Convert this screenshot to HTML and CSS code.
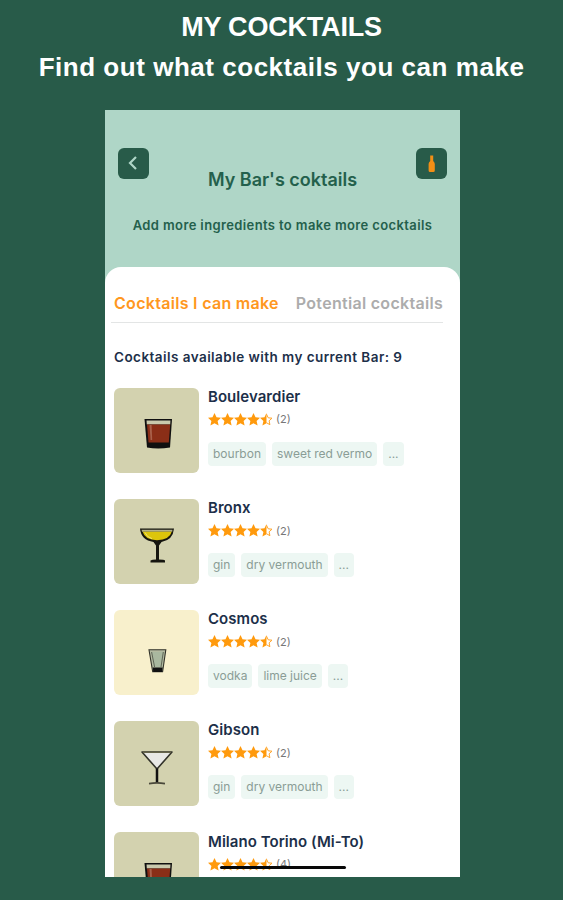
FILE: index.html
```html
<!DOCTYPE html>
<html lang="en">
<head>
  <meta charset="UTF-8" />
  <meta name="viewport" content="width=device-width, initial-scale=1.0" />
  <title>My Cocktails</title>
  <link rel="stylesheet" href="styles.css">
</head>
<body>
  <!-- shared icons -->
  <svg class="sprite" aria-hidden="true">
    <symbol id="stars" viewBox="0 0 65 13">
      <g fill="#ff9a0d">
        <path id="star" d="M6.5 0 8.5 4.2 13 4.7 9.6 7.9 10.6 12.6 6.5 10.3 2.4 12.6 3.4 7.9 0 4.7 4.5 4.2Z" />
        <use href="#star" x="13" />
        <use href="#star" x="26" />
        <use href="#star" x="39" />
        <path d="M58.5 0V10.3L54.4 12.6 55.4 7.9 52 4.7 56.5 4.2Z" />
      </g>
      <path d="M58.5 1.2 60.2 4.8 64 5.2 61.1 7.8 61.9 11.7 58.5 9.7" fill="none" stroke="#ffa52b" stroke-width="1" />
    </symbol>
    <symbol id="rocks" viewBox="0 0 85 85">
      <path d="M30.5 31H58L56 59.5Q44 61.5 33 59.5Z" fill="#101010" />
      <path d="M32.5 32.5H56.5L56.2 36.5H32.8Z" fill="#c9c9ad" />
      <path d="M33 36.5H56.2L54.8 54.5H34.5Z" fill="#8a2e17" />
      <path d="M35.5 37H37.6L38.2 52H36.6Z" fill="#a9604a" />
    </symbol>
    <symbol id="coupe" viewBox="0 0 85 85">
      <path d="M26 29.5H60Q59 41 47.5 43L45 46.5V60.5Q50 60.5 51 61.5V63.5H36.5V61.5Q38 60.5 42 60.5V46.5L39.5 43Q27 41 26 29.5Z" fill="#15150f" />
      <path d="M27.5 30.8H58.5L58.2 32.8H28Z" fill="#b5b28a" />
      <path d="M28.6 32.8H57.7Q55.5 41 43 41.3 31 41 28.6 32.8Z" fill="#dcc50b" />
      <path d="M31 33.5Q33 38.5 38 39.6" fill="none" stroke="#eee17a" stroke-width="1" />
    </symbol>
    <symbol id="shot" viewBox="0 0 85 85">
      <path d="M35 39.8H51.8L48.6 61.8H38.7Z" fill="#b3baa0" stroke="#33332a" stroke-width="1.1" />
      <path d="M37 42H50L48 57H40Z" fill="#a9b89f" />
      <path d="M38.8 57.5H48.6L48.2 62H39.2Z" fill="#111" />
      <path d="M37.6 42 40.6 57M49.3 42 47 57" stroke="#4d5144" stroke-width=".8" />
    </symbol>
    <symbol id="martini" viewBox="0 0 85 85">
      <path d="M28 31H58L43 48Z" fill="#e8e8e5" stroke="#33332a" stroke-width="1.6" stroke-linejoin="round" />
      <path d="M29 31.4H57" stroke="#65644a" stroke-width="1.4" />
      <path d="M43 47.5V62" stroke="#111" stroke-width="2.5" />
      <path d="M35 62.6Q43 61.2 51 62.6" fill="none" stroke="#49483a" stroke-width="1.6" />
    </symbol>
  </svg>

  <header class="promo">
    <h1>MY COCKTAILS</h1>
    <p>Find out what cocktails you can make</p>
  </header>

  <main class="phone">
    <section class="top">
      <nav class="top-nav">
        <button class="icon-btn" aria-label="Back">
          <svg width="31" height="31" viewBox="0 0 31 31"><path d="M18 9 12 15 18 21" fill="none" stroke="#afd6c7" stroke-width="2.2" /></svg>
        </button>
        <button class="icon-btn" aria-label="My bar">
          <svg width="31" height="31" viewBox="0 0 31 31"><path d="M14.2 7.5H17.2V13Q18.8 14.5 18.8 16V22.5Q18.8 24 17.3 24H14.1Q12.6 24 12.6 22.5V16Q12.6 14.5 14.2 13Z" fill="#f28f16" /></svg>
        </button>
      </nav>
      <h2>My Bar's coktails</h2>
      <p>Add more ingredients to make more cocktails</p>
    </section>

    <section class="sheet">
      <div class="tabs">
        <span class="tab active">Cocktails I can make</span>
        <span class="tab">Potential cocktails</span>
      </div>
      <p class="count">Cocktails available with my current Bar: 9</p>

      <div class="list">
        <article class="drink">
          <svg class="thumb"><use href="#rocks" /></svg>
          <div class="info">
            <h3>Boulevardier</h3>
            <div class="rating"><svg><use href="#stars" /></svg><span>(2)</span></div>
            <div class="tags"><span>bourbon</span><span>sweet red vermo</span><span>...</span></div>
          </div>
        </article>
        <article class="drink">
          <svg class="thumb"><use href="#coupe" /></svg>
          <div class="info">
            <h3>Bronx</h3>
            <div class="rating"><svg><use href="#stars" /></svg><span>(2)</span></div>
            <div class="tags"><span>gin</span><span>dry vermouth</span><span>...</span></div>
          </div>
        </article>
        <article class="drink">
          <svg class="thumb light"><use href="#shot" /></svg>
          <div class="info">
            <h3>Cosmos</h3>
            <div class="rating"><svg><use href="#stars" /></svg><span>(2)</span></div>
            <div class="tags"><span>vodka</span><span>lime juice</span><span>...</span></div>
          </div>
        </article>
        <article class="drink">
          <svg class="thumb"><use href="#martini" /></svg>
          <div class="info">
            <h3>Gibson</h3>
            <div class="rating"><svg><use href="#stars" /></svg><span>(2)</span></div>
            <div class="tags"><span>gin</span><span>dry vermouth</span><span>...</span></div>
          </div>
        </article>
        <article class="drink">
          <svg class="thumb"><use href="#rocks" /></svg>
          <div class="info">
            <h3>Milano Torino (Mi-To)</h3>
            <div class="rating"><svg><use href="#stars" /></svg><span>(4)</span></div>
          </div>
        </article>
      </div>
    </section>
    <div class="home-bar"></div>
  </main>
</body>
</html>
```

FILE: styles.css
```css
:root {
  --green: #285b49;
  --mint: #afd6c7;
  --navy: #1c2f49;
  --orange: #ff9720;
}
* {
  box-sizing: border-box;
}
body {
  margin: 0;
  height: 900px;
  overflow: hidden;
  background: var(--green);
  font-family: Inter, sans-serif;
}
h1, h2, h3, p {
  margin: 0;
  white-space: nowrap;
}
.sprite {
  display: none;
}
.promo {
  height: 110px;
  padding-top: 7px;
  text-align: center;
  color: #fff;
  font-family: "Liberation Sans", Arial, sans-serif;
  font-weight: bold;
}
.promo h1 {
  font-size: 27px;
  line-height: 40px;
  letter-spacing: -0.2px;
}
.promo p {
  font-size: 26px;
  line-height: 40px;
  letter-spacing: 0.53px;
}
.phone {
  position: relative;
  width: 355px;
  height: 767px;
  margin-left: 105px;
  overflow: hidden;
  background: var(--mint);
}
.top {
  height: 157px;
  padding: 38px 13px 0;
  text-align: center;
  color: #24604c;
}
.top-nav {
  display: flex;
  justify-content: space-between;
  height: 20px;
}
.icon-btn {
  width: 31px;
  height: 31px;
  padding: 0;
  border: none;
  border-radius: 6px;
  background: var(--green);
}
.icon-btn svg {
  display: block;
}
.top h2 {
  font-size: 18px;
  font-weight: 600;
  line-height: 24px;
}
.top p {
  margin-top: 23px;
  font-size: 13px;
  font-weight: 600;
  line-height: 20px;
  letter-spacing: 0.38px;
}
.sheet {
  height: 610px;
  padding: 17px 17px 0 6px;
  border-radius: 16px 16px 0 0;
  background: #fff;
}
.tabs {
  display: flex;
  justify-content: space-between;
  height: 39px;
  padding: 0 0 0 3px;
  border-bottom: 1px solid #e3e5e5;
  line-height: 38px;
  white-space: nowrap;
}
.tab {
  color: #acacac;
  font-size: 16px;
  font-weight: 600;
  letter-spacing: 0.3px;
}
.tab.active {
  color: var(--orange);
}
.count {
  margin: 24px 0 0 3px;
  color: var(--navy);
  font-size: 13.5px;
  font-weight: 600;
  line-height: 20px;
  letter-spacing: 0.45px;
}
.list {
  display: flex;
  flex-direction: column;
  gap: 26.2px;
  padding: 20.5px 0 0 3px;
}
.drink {
  display: flex;
  gap: 9px;
  height: 85px;
}
.thumb {
  flex: none;
  width: 85px;
  height: 85px;
  border-radius: 6px;
  background: #d3d2af;
}
.thumb.light {
  background: #f8f0cc;
}
.drink h3 {
  margin-top: -0.7px;
  color: var(--navy);
  font-size: 15px;
  font-weight: 600;
  line-height: 20px;
  letter-spacing: 0.05px;
}
.rating {
  display: flex;
  align-items: center;
  gap: 3px;
  height: 13px;
  margin-top: 6px;
  color: #777;
  font-size: 11px;
}
.rating svg {
  width: 65px;
  height: 13px;
}
.tags {
  display: flex;
  gap: 6px;
  margin-top: 16px;
}
.tags span {
  height: 24px;
  padding: 0 5px;
  border-radius: 4px;
  background: #edf7f3;
  color: #8a9d96;
  font-size: 12px;
  line-height: 24px;
  white-space: nowrap;
}
.home-bar {
  position: absolute;
  left: 115px;
  bottom: 8px;
  width: 126px;
  height: 3px;
  border-radius: 2px;
  background: #080808;
}
```
